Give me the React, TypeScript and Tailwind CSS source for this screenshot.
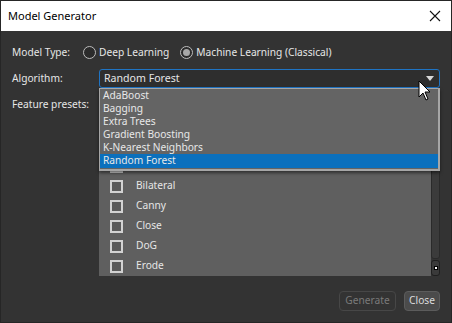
import React from 'react';

const algorithms = ['AdaBoost', 'Bagging', 'Extra Trees', 'Gradient Boosting', 'K-Nearest Neighbors', 'Random Forest'];
// first four rows sit under the open popup, only their boxes peek out
const presets = ['', '', '', '', 'Bilateral', 'Canny', 'Close', 'DoG', 'Erode'];

const Radio: React.FC<{ checked?: boolean; label: string }> = ({ checked, label }) => (
  <div className="flex items-center gap-[3px]">
    <span className="w-[13px] h-[13px] rounded-full border border-[#bdbdbd] bg-[#2b2b2b] flex items-center justify-center">
      {checked && <span className="w-[7px] h-[7px] rounded-full bg-[#a8a8a8]" />}
    </span>
    <span>{label}</span>
  </div>
);

const App: React.FC = () => {
  return (
    <div className="w-[452px] h-[323px] flex flex-col border border-[#262626] bg-[#333333] text-[#e6e6e6] font-['Noto_Sans',sans-serif] text-[10.2px] relative overflow-hidden">
      {/* Title bar */}
      <div className="h-[30px] bg-white flex items-center justify-between pl-[7px] pr-[9px] text-black text-[11px]">
        <span>Model Generator</span>
        <svg width="12" height="12" viewBox="0 0 12 12" className="mr-[1px]">
          <path d="M1 1 L11 11 M11 1 L1 11" stroke="#111" strokeWidth="1.1" />
        </svg>
      </div>

      <div className="flex-1 flex flex-col px-[11px] pt-[12px]">
        {/* Model type */}
        <div className="flex items-center h-[20px]">
          <span className="w-[71px]">Model Type:</span>
          <Radio label="Deep Learning" />
          <span className="w-[11px]" />
          <Radio checked label="Machine Learning (Classical)" />
        </div>

        {/* Algorithm */}
        <div className="flex items-center mt-[6px] relative">
          <span className="w-[87px]">Algorithm:</span>
          <div className="flex-1 h-[19px] rounded-[3px] border border-[#1f74c4] bg-[#2e2e2e] flex items-center justify-between pl-[4px] pr-[5px] text-[10.6px]">
            <span>Random Forest</span>
            <svg width="8" height="5" viewBox="0 0 8 5">
              <path d="M0 0 H8 L4 5 Z" fill="#d8d8d8" />
            </svg>
          </div>

          {/* Dropdown popup */}
          <div className="absolute left-[87px] right-0 top-[19px] z-20 bg-[#646464] border border-[#a6a6a6] border-r-2 border-b-2 shadow-[0_2px_3px_rgba(0,0,0,0.5)] text-[#e8e8e8] leading-[13px] pb-[1px]">
            {algorithms.map((a) => (
              <div key={a} className={`pl-[3px] h-[13px] ${a === 'Random Forest' ? 'bg-[#0b70bd] h-[14px]' : ''}`}>
                {a}
              </div>
            ))}
          </div>
        </div>

        {/* Feature presets */}
        <div className="flex mt-[7px]">
          <span className="w-[87px] pt-[2px]">Feature presets:</span>
          <div className="flex-1 flex h-[181px]">
            <div className="flex-1 bg-[#5f5f5f] flex flex-col justify-end overflow-hidden">
              {presets.map((p, i) => (
                <div key={i} className="h-[20px] shrink-0 flex items-center pl-[11px] gap-[13px]">
                  <span className="w-[13px] h-[13px] border-2 border-[#d2d2d2] bg-[#5a5a5a]" />
                  {p && <span>{p}</span>}
                </div>
              ))}
            </div>
            <div className="w-[9px] flex flex-col gap-[1px] bg-[#333333]">
              <div className="flex-1 rounded-[3px] bg-[#3b3b3b] border border-[#2a2a2a]" />
              <div className="h-[16px] rounded-[3px] border border-[#1f1f1f] bg-[#3a3a3a] flex items-center justify-center">
                <span className="w-[4px] h-[4px] bg-white border border-black" />
              </div>
            </div>
          </div>
        </div>

        {/* Buttons */}
        <div className="flex justify-end gap-[8px] mt-[15px]">
          <button className="h-[20px] w-[57px] rounded-[4px] border border-[#474747] bg-[#333333] text-[#7a7a7a]">Generate</button>
          <button className="h-[20px] w-[36px] rounded-[4px] border border-[#5c5c5c] bg-[#4b4b4b] text-[#dcdcdc]">Close</button>
        </div>
      </div>

      {/* mouse cursor */}
      <svg className="absolute left-[417px] top-[79px] z-30" width="14" height="22" viewBox="0 0 14 22">
        <path d="M1 1 L1 17 L5 13 L8 20 L10 19 L7 12 L12 12 Z" fill="white" stroke="black" strokeWidth="1" />
      </svg>
    </div>
  );
};

export default App;
